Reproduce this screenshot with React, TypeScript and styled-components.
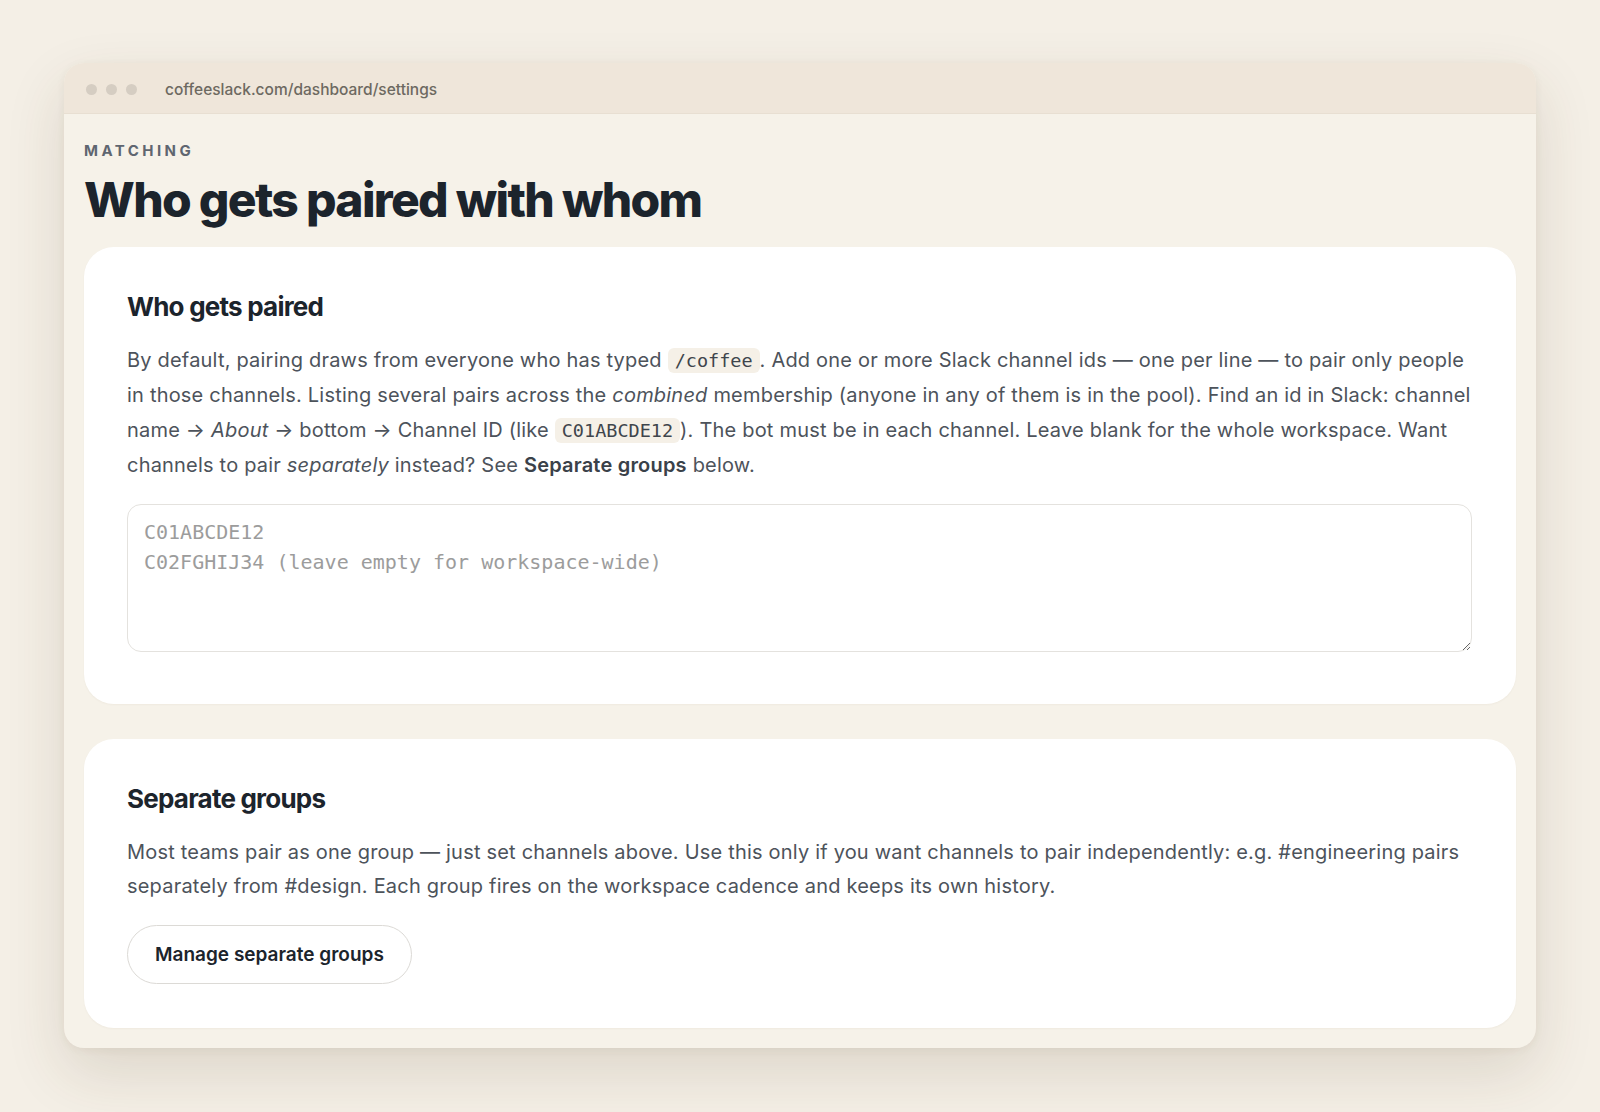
import styled, { createGlobalStyle } from "styled-components";

const GlobalStyle = createGlobalStyle`
  * {
    box-sizing: border-box;
  }
  body {
    margin: 0;
    background: #f4efe6;
    font-family: Inter, "Noto Sans", sans-serif;
    -webkit-font-smoothing: antialiased;
  }
`;

const SPage = styled.div`
  min-height: 100vh;
  padding: 63px 64px 64px;
`;

const SWindow = styled.div`
  background: #f6f2e9;
  border-radius: 20px;
  overflow: hidden;
  box-shadow: 0 24px 60px rgba(80, 60, 30, 0.14), 0 2px 8px rgba(80, 60, 30, 0.06);
`;

const STitleBar = styled.div`
  display: flex;
  align-items: center;
  height: 51px;
  padding: 2px 0 0 22px;
  background: #efe6da;
  border-bottom: 1px solid #e8dfd2;
`;

const SDots = styled.div`
  display: flex;
  gap: 9px;
  margin-right: 28px;
`;

const SDot = styled.span`
  width: 11px;
  height: 11px;
  border-radius: 50%;
  background: #d5cdc2;
`;

const SUrl = styled.span`
  font-size: 15.5px;
  font-weight: 500;
  color: #6d6961;
`;

const SContent = styled.div`
  padding: 27px 20px 20px;
  display: flex;
  flex-direction: column;
`;

const SEyebrow = styled.div`
  font-size: 15px;
  font-weight: 700;
  letter-spacing: 0.23em;
  color: #5f6670;
  text-transform: uppercase;
  line-height: 20px;
`;

const STitle = styled.h1`
  margin: 13px 0 20px;
  font-size: 48px;
  font-weight: 800;
  letter-spacing: -0.035em;
  line-height: 1.1;
  color: #1c242c;
`;

const SCards = styled.div`
  display: flex;
  flex-direction: column;
  gap: 35px;
`;

const SCard = styled.section`
  background: #ffffff;
  border-radius: 30px;
  padding: 44px 44px 44px 43px;
  box-shadow: 0 1px 2px rgba(80, 60, 30, 0.04);
`;

const SCardTitle = styled.h2`
  margin: 0 0 20px;
  font-size: 26px;
  font-weight: 750;
  letter-spacing: -0.03em;
  line-height: 32px;
  color: #1c242c;
`;

const SText = styled.p`
  margin: 0 0 21px;
  font-size: 20px;
  letter-spacing: 0.2px;
  line-height: 34.5px;
  color: #4d535b;

  em {
    font-style: italic;
  }
  strong {
    font-weight: 600;
    color: #3a4149;
  }
`;

const SCode = styled.code`
  font-family: "DejaVu Sans Mono", "Liberation Mono", monospace;
  font-size: 18.5px;
  letter-spacing: 0;
  background: #f5f0e7;
  color: #3f454c;
  border-radius: 6px;
  padding: 2px 7px;
`;

const STextArea = styled.textarea`
  display: block;
  width: 100%;
  height: 148px;
  margin-bottom: 8px;
  padding: 12px 16px;
  border: 1.5px solid #e4e2de;
  border-radius: 14px;
  font-family: "DejaVu Sans Mono", "Liberation Mono", monospace;
  font-size: 20px;
  line-height: 30px;
  color: #333;
  background: #fff;
  outline: none;
  resize: vertical;

  &::placeholder {
    color: #9c9c9c;
  }
`;

const SButton = styled.button`
  align-self: flex-start;
  height: 59px;
  padding: 0 27px;
  border: 1.5px solid #dcdad6;
  border-radius: 999px;
  background: #fff;
  font-family: Inter, "Noto Sans", sans-serif;
  font-size: 19px;
  font-weight: 600;
  color: #1c242c;
  cursor: pointer;
`;

const App = () => {
  return (
    <>
      <GlobalStyle />
      <SPage>
        <SWindow>
          <STitleBar>
            <SDots>
              <SDot />
              <SDot />
              <SDot />
            </SDots>
            <SUrl>coffeeslack.com/dashboard/settings</SUrl>
          </STitleBar>
          <SContent>
            <SEyebrow>Matching</SEyebrow>
            <STitle>Who gets paired with whom</STitle>
            <SCards>
              <SCard>
                <SCardTitle>Who gets paired</SCardTitle>
                <SText>
                  By default, pairing draws from everyone who has typed <SCode>/coffee</SCode>. Add one or
                  more Slack channel ids — one per line — to pair only people in those channels. Listing
                  several pairs across the <em>combined</em> membership (anyone in any of them is in the
                  pool). Find an id in Slack: channel name → <em>About</em> → bottom → Channel ID (like{" "}
                  <SCode>C01ABCDE12</SCode>). The bot must be in each channel. Leave blank for the whole
                  workspace. Want channels to pair <em>separately</em> instead? See{" "}
                  <strong>Separate groups</strong> below.
                </SText>
                <STextArea placeholder={"C01ABCDE12\nC02FGHIJ34 (leave empty for workspace-wide)"} />
              </SCard>
              <SCard>
                <SCardTitle>Separate groups</SCardTitle>
                <SText>
                  Most teams pair as one group — just set channels above. Use this only if you want
                  channels to pair independently: e.g. #engineering pairs separately from #design. Each
                  group fires on the workspace cadence and keeps its own history.
                </SText>
                <SButton>Manage separate groups</SButton>
              </SCard>
            </SCards>
          </SContent>
        </SWindow>
      </SPage>
    </>
  );
};

export default App;
